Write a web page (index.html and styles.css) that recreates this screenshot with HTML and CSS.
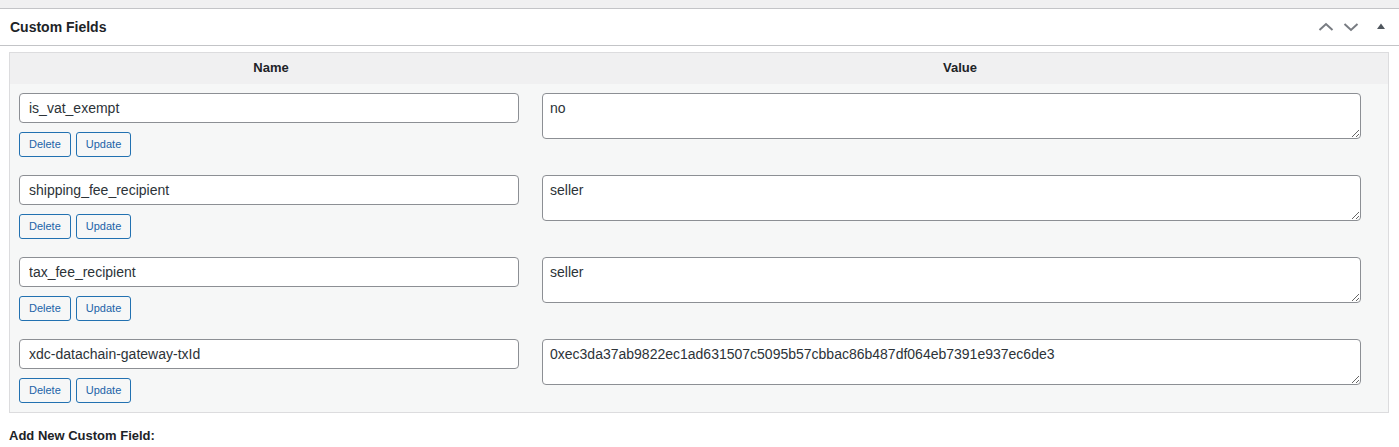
FILE: index.html
```html
<!DOCTYPE html>
<html>
<head>
<meta charset="utf-8">
<link rel="stylesheet" href="styles.css">
</head>
<body>
<div class="topband"></div>
<div class="postbox">
  <div class="postbox-header">
    <h2 class="hndle">Custom Fields</h2>
    <div class="handle-actions">
      <button class="handle-btn" aria-label="Move up">
        <svg width="16" height="10" viewBox="0 0 16 10"><path d="M1.5 8 L8 2 L14.5 8" fill="none" stroke="#787c82" stroke-width="2"/></svg>
      </button>
      <button class="handle-btn" aria-label="Move down">
        <svg width="16" height="10" viewBox="0 0 16 10"><path d="M1.5 2 L8 8 L14.5 2" fill="none" stroke="#787c82" stroke-width="2"/></svg>
      </button>
      <button class="handle-btn toggle" aria-label="Toggle panel">
        <svg width="8" height="6" viewBox="0 0 8 6"><path d="M0 6 L4 0.5 L8 6 Z" fill="#50575e"/></svg>
      </button>
    </div>
  </div>
  <div class="inside">
    <div class="list-table">
      <div class="thead">
        <div class="th">Name</div>
        <div class="th">Value</div>
      </div>
      <div class="row">
        <div class="cell-left">
          <input class="key" type="text" value="is_vat_exempt">
          <div class="actions"><button class="small-btn">Delete</button><button class="small-btn">Update</button></div>
        </div>
        <div class="cell-right"><textarea class="val">no</textarea></div>
      </div>
      <div class="row">
        <div class="cell-left">
          <input class="key" type="text" value="shipping_fee_recipient">
          <div class="actions"><button class="small-btn">Delete</button><button class="small-btn">Update</button></div>
        </div>
        <div class="cell-right"><textarea class="val">seller</textarea></div>
      </div>
      <div class="row">
        <div class="cell-left">
          <input class="key" type="text" value="tax_fee_recipient">
          <div class="actions"><button class="small-btn">Delete</button><button class="small-btn">Update</button></div>
        </div>
        <div class="cell-right"><textarea class="val">seller</textarea></div>
      </div>
      <div class="row">
        <div class="cell-left">
          <input class="key" type="text" value="xdc-datachain-gateway-txId">
          <div class="actions"><button class="small-btn">Delete</button><button class="small-btn">Update</button></div>
        </div>
        <div class="cell-right"><textarea class="val">0xec3da37ab9822ec1ad631507c5095b57cbbac86b487df064eb7391e937ec6de3</textarea></div>
      </div>
    </div>
    <p class="addnew">Add New Custom Field:</p>
  </div>
</div>
</body>
</html>
```
FILE: styles.css
```css
* { box-sizing: border-box; }
html, body { margin: 0; padding: 0; }
body {
  background: #f0f0f1;
  font-family: "Liberation Sans", Arial, sans-serif;
  color: #1d2327;
  width: 1399px;
  height: 447px;
  overflow: hidden;
}
.topband { height: 8px; background: #f0f0f1; }
.postbox {
  background: #fff;
  border-top: 1px solid #c3c4c7;
  min-height: 439px;
}
.postbox-header {
  height: 37px;
  border-bottom: 1px solid #c3c4c7;
  display: flex;
  align-items: center;
  justify-content: space-between;
}
.hndle {
  margin: 0;
  padding: 0 0 0 10px;
  font-size: 14px;
  font-weight: 700;
  line-height: 20px;
  color: #1d2327;
}
.handle-actions { display: flex; align-items: center; padding-right: 0; }
.handle-btn {
  border: 0;
  background: none;
  padding: 0;
  margin: 0;
  width: 25px;
  height: 36px;
  display: flex;
  align-items: center;
  justify-content: center;
}
.handle-btn.toggle { width: 36px; }
.handle-btn.toggle svg { margin-top: -2px; }
.inside { padding: 6px 10px 0 9px; }
.list-table {
  border: 1px solid #dcdcde;
  background: #f6f7f7;
}
.thead {
  display: grid;
  grid-template-columns: 522px 1fr;
  background: #f0f0f1;
  height: 31px;
}
.th {
  text-align: center;
  font-size: 13px;
  font-weight: 700;
  line-height: 18px;
  padding-top: 6px;
  color: #1d2327;
}
.row {
  display: grid;
  grid-template-columns: 522px 1fr;
  height: 82px;
}
.cell-left { padding: 9px 0 9px 9px; }
.cell-right { padding: 9px 0 0 10px; }
.key {
  display: block;
  width: 500px;
  height: 30px;
  margin: 0;
  border: 1px solid #8c8f94;
  border-radius: 4px;
  background: #fff;
  padding: 0 9px;
  font-family: "Liberation Sans", Arial, sans-serif;
  font-size: 14px;
  color: #2c3338;
  outline: none;
}
.actions { display: flex; gap: 5px; margin-top: 9px; }
.small-btn {
  height: 25px;
  margin: 0;
  padding: 0 9px;
  border: 1px solid #2271b1;
  border-radius: 3px;
  background: #f6f7f7;
  color: #2163a8;
  font-family: "Liberation Sans", Arial, sans-serif;
  font-size: 11px;
  line-height: 23px;
}
.val {
  display: block;
  width: 819px;
  height: 46px;
  margin: 0;
  border: 1px solid #8c8f94;
  border-radius: 4px;
  background: #fff;
  padding: 5px 7px;
  font-family: "Liberation Sans", Arial, sans-serif;
  font-size: 14px;
  line-height: 18px;
  color: #2c3338;
  resize: vertical;
  outline: none;
}
.addnew {
  margin: 14px 0 0 0;
  font-size: 13px;
  font-weight: 700;
  line-height: 18px;
  color: #1d2327;
}
```
